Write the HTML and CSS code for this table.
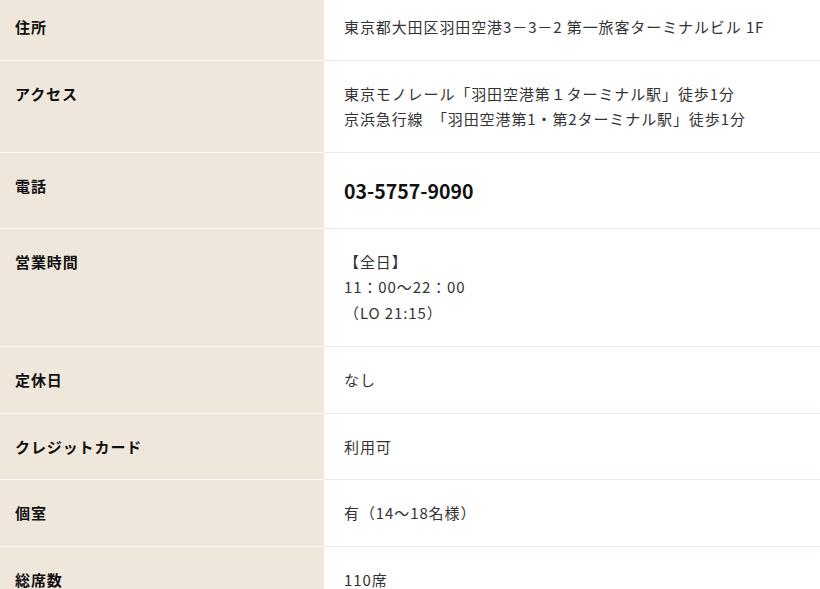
FILE: index.html
```html
<!DOCTYPE html>
<html lang="ja">
<head>
<meta charset="utf-8">
<title>店舗情報</title>
<link rel="stylesheet" href="styles.css">
</head>
<body>
<table class="info">
  <tbody>
    <tr><th>住所</th><td>東京都大田区羽田空港3－3－2 第一旅客ターミナルビル 1F</td></tr>
    <tr><th>アクセス</th><td>東京モノレール「羽田空港第１ターミナル駅」徒歩1分<br>京浜急行線　「羽田空港第1・第2ターミナル駅」徒歩1分</td></tr>
    <tr><th>電話</th><td class="tel">03-5757-9090</td></tr>
    <tr><th>営業時間</th><td class="hours">【全日】<br>11：00～22：00<br>（LO 21:15）</td></tr>
    <tr><th>定休日</th><td>なし</td></tr>
    <tr><th>クレジットカード</th><td>利用可</td></tr>
    <tr><th>個室</th><td>有（14～18名様）</td></tr>
    <tr><th>総席数</th><td>110席</td></tr>
  </tbody>
</table>
</body>
</html>
```
FILE: styles.css
```css
html, body {
  margin: 0;
  padding: 0;
  background: #fff;
}
body {
  font-family: "Noto Sans CJK JP", "Noto Sans", sans-serif;
  color: #333;
  overflow: hidden;
}
.info {
  width: 820px;
  border-collapse: collapse;
  margin-top: -6px;
}
.info th,
.info td {
  font-size: 15px;
  line-height: 25.5px;
  letter-spacing: 0.06em;
  vertical-align: top;
  text-align: left;
  padding-top: 20px;
  padding-bottom: 20px;
}
.info th {
  width: 309px;
  padding-left: 15px;
  padding-right: 0;
  background: #efe7dc;
  color: #111;
  font-weight: bold;
  border-bottom: 1px solid #fff;
}
.info td {
  padding-left: 20px;
  padding-right: 10px;
  border-bottom: 1px solid #efe7dc;
}
.info td.tel {
  font-size: 19.5px;
  line-height: 35px;
  font-weight: bold;
  color: #111;
  letter-spacing: 0;
}
.info td.hours {
  line-height: 25.85px;
}
```
